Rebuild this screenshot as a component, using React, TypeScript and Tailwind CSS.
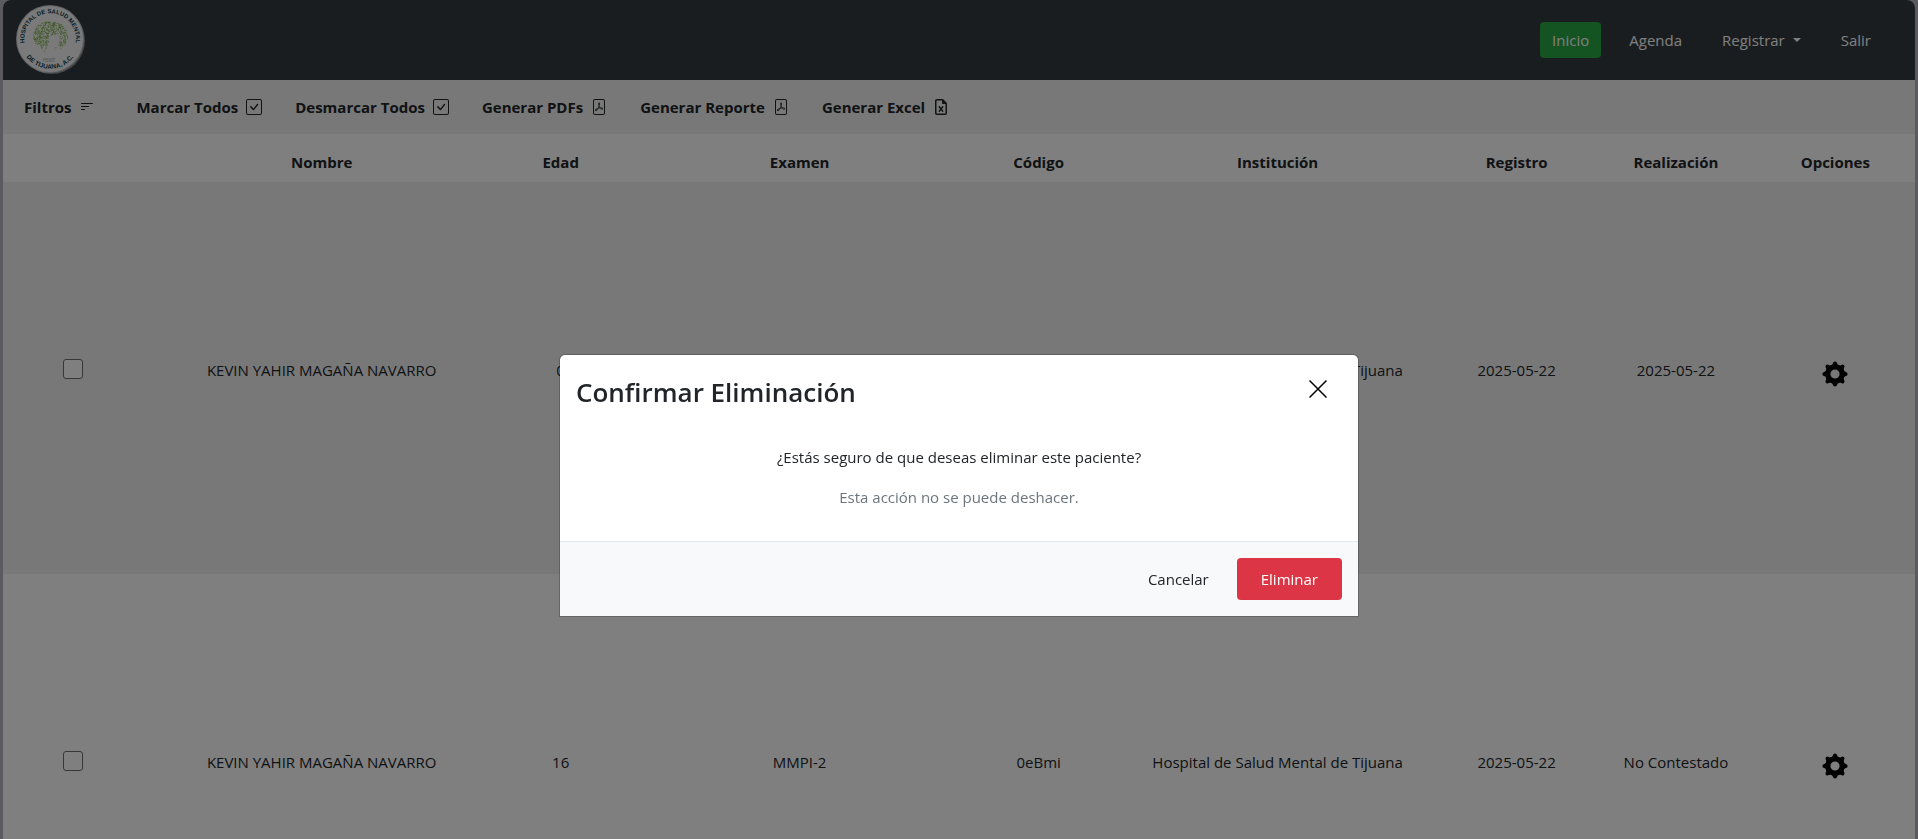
import { useState } from "react";
import { BsCheckSquare, BsFilePdf, BsFilterLeft } from "react-icons/bs";
import { FaRegFileExcel } from "react-icons/fa6";
import type { IconType } from "react-icons";

type Patient = {
  id: number;
  nombre: string;
  edad: string;
  examen: string;
  codigo: string;
  institucion: string;
  registro: string;
  realizacion: string;
};

const patients: Patient[] = [
  {
    id: 1,
    nombre: "KEVIN YAHIR MAGAÑA NAVARRO",
    edad: "0",
    examen: "MMPI-2",
    codigo: "0eBmi",
    institucion: "Hospital de Salud Mental de Tijuana",
    registro: "2025-05-22",
    realizacion: "2025-05-22",
  },
  {
    id: 2,
    nombre: "KEVIN YAHIR MAGAÑA NAVARRO",
    edad: "16",
    examen: "MMPI-2",
    codigo: "0eBmi",
    institucion: "Hospital de Salud Mental de Tijuana",
    registro: "2025-05-22",
    realizacion: "No Contestado",
  },
];

const actions: { label: string; icon: IconType }[] = [
  { label: "Marcar Todos", icon: BsCheckSquare },
  { label: "Desmarcar Todos", icon: BsCheckSquare },
  { label: "Generar PDFs", icon: BsFilePdf },
  { label: "Generar Reporte", icon: BsFilePdf },
  { label: "Generar Excel", icon: FaRegFileExcel },
];

const noise = (n: number) => {
  const s = Math.sin(n) * 43758.5453;
  return s - Math.floor(s);
};

// Speckled foliage of the tree in the logo, scattered inside an ellipse with a gap for the trunk.
const leaves = Array.from({ length: 620 }, (_, i) => {
  const angle = noise(i * 12.9898 + 1) * Math.PI * 2;
  const radius = Math.sqrt(noise(i * 78.233 + 2));
  return {
    x: 35.5 + Math.cos(angle) * radius * 17.5,
    y: 32 + Math.sin(angle) * radius * 14.5,
    r: 0.35 + noise(i * 3.17) * 0.35,
    dark: i % 3 === 0,
  };
}).filter(({ x, y }) => !(y > 31 && x > 33 + (40 - y) * 0.3 && x < 44) && !(y > 42 && x > 44) && !(y > 41 && x < 26));

function Logo() {
  return (
    <svg width="72" height="72" viewBox="0 0 72 72" role="img" aria-label="Hospital de Salud Mental de Tijuana, A.C.">
      <circle cx="36.5" cy="36.5" r="33.5" fill="#8b8f92" />
      <circle cx="35" cy="35" r="34" fill="#c4c6c8" />
      <circle cx="35" cy="35" r="33" fill="#f4f4f4" />
      {leaves.map((leaf, i) => (
        <circle key={i} cx={leaf.x} cy={leaf.y} r={leaf.r} fill={leaf.dark ? "#6fa43c" : "#a3c878"} />
      ))}
      <path d="M29 46l1 4M41 43l-1 3M45 42l1 4" stroke="#a3c878" strokeWidth="0.8" strokeDasharray="1 1" />
      <path id="logo-top" d="M9.6 39A25.8 25.8 0 1 1 60.6 39" fill="none" />
      <path id="logo-bottom" d="M7.5 46A29.5 29.5 0 0 0 62.5 46" fill="none" />
      <g fill="#0c3c58" fontFamily="'Liberation Sans', Arial, sans-serif" fontWeight="700" textAnchor="middle">
        <text fontSize="6">
          <textPath href="#logo-top" startOffset="50%">HOSPITAL DE SALUD MENTAL</textPath>
        </text>
        <text fontSize="6.4">
          <textPath href="#logo-bottom" startOffset="50%">DE TIJUANA, A.C.</textPath>
        </text>
      </g>
      <text x="34" y="58" fontSize="4.5" fill="#a8a8a8" textAnchor="middle" fontFamily="'Liberation Sans', Arial, sans-serif">
        HSMT
      </text>
      <path d="M57 67q2-2 3 0t3-1" stroke="#0c3c58" strokeWidth="1" fill="none" />
    </svg>
  );
}

function Gear() {
  return (
    <svg width="26" height="26" viewBox="-13 -13 26 26" aria-hidden="true">
      <circle r="7.2" fill="none" stroke="#000" strokeWidth="5.2" />
      {[0, 45, 90, 135, 180, 225, 270, 315].map((a) => (
        <path
          key={a}
          transform={`rotate(${a})`}
          d="M-4.4 -8.4Q-2.4 -9 -2.1 -10.8Q-1.8 -12.6 0 -12.6Q1.8 -12.6 2.1 -10.8Q2.4 -9 4.4 -8.4Z"
        />
      ))}
    </svg>
  );
}

function Navbar() {
  const link = "rounded px-3 py-1.5 leading-6 text-white";
  return (
    <header className="flex h-20 items-center justify-between rounded-t-lg bg-[#343a40] pr-8 pl-3">
      <a href="#inicio">
        <Logo />
      </a>
      <nav className="flex items-center gap-4">
        <a href="#inicio" className="rounded bg-[#28a745] px-3 py-1.5 leading-6 text-white">
          Inicio
        </a>
        <a href="#agenda" className={link}>
          Agenda
        </a>
        <button type="button" className="flex items-center gap-2 rounded px-3 py-1.5 leading-6 text-white">
          Registrar
          <svg width="8" height="4" viewBox="0 0 8 4" fill="currentColor" aria-hidden="true">
            <path d="M0 0h8L4 4z" />
          </svg>
        </button>
        <a href="#salir" className={link}>
          Salir
        </a>
      </nav>
    </header>
  );
}

function Toolbar() {
  return (
    <div className="flex h-[54px] items-center gap-[33px] bg-[#f0f0f0] px-[21px] font-bold">
      <button type="button" className="mr-2 flex items-center gap-2">
        Filtros
        <BsFilterLeft size={16} />
      </button>
      {actions.map(({ label, icon: Icon }) => (
        <button key={label} type="button" className="flex items-center gap-2">
          {label}
          <Icon size={16} />
        </button>
      ))}
    </div>
  );
}

function PatientTable() {
  return (
    <table className="w-full table-fixed text-center leading-6">
      <colgroup>
        <col className="w-1/12" />
        <col className="w-2/12" />
        <col className="w-1/12" />
        <col className="w-2/12" />
        <col className="w-1/12" />
        <col className="w-2/12" />
        <col className="w-1/12" />
        <col className="w-1/12" />
        <col className="w-1/12" />
      </colgroup>
      <thead>
        <tr className="h-12">
          <th aria-label="Seleccionar" />
          {["Nombre", "Edad", "Examen", "Código", "Institución", "Registro", "Realización", "Opciones"].map((h) => (
            <th key={h} className="pt-2 font-bold">
              {h}
            </th>
          ))}
        </tr>
      </thead>
      <tbody>
        {patients.map((p) => (
          <tr key={p.id} className="h-[392px] align-top odd:bg-[#f0f0f0] [&>td]:pt-44">
            <td>
              <input
                type="checkbox"
                aria-label={`Seleccionar ${p.nombre}`}
                className="mt-px mr-5 size-5 appearance-none rounded-[3px] border border-[#6f6f6f] bg-white align-top"
              />
            </td>
            <td>{p.nombre}</td>
            <td>{p.edad}</td>
            <td>{p.examen}</td>
            <td>{p.codigo}</td>
            <td>{p.institucion}</td>
            <td>{p.registro}</td>
            <td>{p.realizacion}</td>
            <td>
              <button type="button" aria-label="Opciones" className="pt-[3px] align-top">
                <Gear />
              </button>
            </td>
          </tr>
        ))}
      </tbody>
    </table>
  );
}

function ConfirmModal({ onClose }: { onClose: () => void }) {
  return (
    <div className="fixed inset-0 flex items-start justify-center bg-black/50 pt-[354px]">
      <div
        role="dialog"
        aria-modal="true"
        aria-labelledby="confirm-title"
        className="w-full max-w-[800px] rounded-t-md border border-black/20 bg-white bg-clip-padding"
      >
        <div className="flex items-start justify-between p-4">
          <h2 id="confirm-title" className="text-[26px] leading-[42px] font-semibold">
            Confirmar Eliminación
          </h2>
          <button
            type="button"
            aria-label="Cerrar"
            onClick={onClose}
            className="flex h-9 w-12 items-center justify-center text-black"
          >
            <svg width="18" height="18" viewBox="0 0 18 18" stroke="currentColor" strokeWidth="1.5" aria-hidden="true">
              <path d="M.5.5l17 17M17.5.5l-17 17" />
            </svg>
          </button>
        </div>
        <div className="flex flex-col gap-4 px-4 pt-4 pb-8 text-center leading-6">
          <p>¿Estás seguro de que deseas eliminar este paciente?</p>
          <p className="text-[#6c757d]">Esta acción no se puede deshacer.</p>
        </div>
        <div className="flex justify-end gap-1 border-t border-[#e5e7e9] bg-[#f8f9fb] p-4">
          <button type="button" onClick={onClose} className="h-[42px] rounded px-6">
            Cancelar
          </button>
          <button type="button" onClick={onClose} className="h-[42px] rounded bg-[#dc3545] px-6 text-white">
            Eliminar
          </button>
        </div>
      </div>
    </div>
  );
}

export default function App() {
  const [open, setOpen] = useState(true);
  return (
    <div className="h-screen overflow-hidden bg-[#b4b4be] px-[3px] font-['Open_Sans','Noto_Sans',sans-serif] text-[15px] text-[#212529]">
      <div className="min-h-full rounded-t-lg bg-white">
        <Navbar />
        <main>
          <Toolbar />
          <PatientTable />
        </main>
      </div>
      {open && <ConfirmModal onClose={() => setOpen(false)} />}
    </div>
  );
}
